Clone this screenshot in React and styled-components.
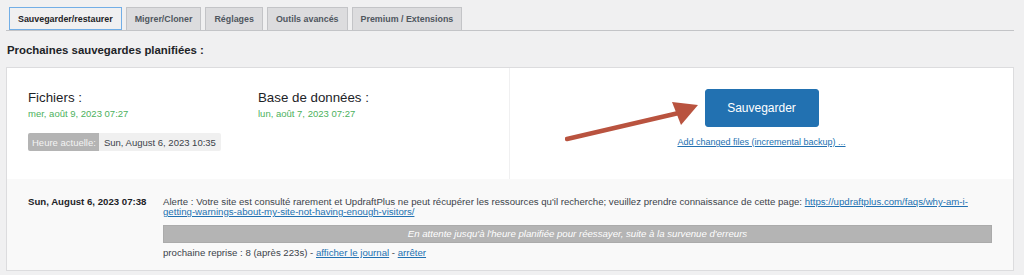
import React from "react";
import styled, { createGlobalStyle } from "styled-components";

const Global = createGlobalStyle`
  html, body { margin: 0; padding: 0; background: #f0f0f1; }
  body { font-family: "Liberation Sans", Arial, sans-serif; color: #1d2327; }
`;

const Page = styled.div`
  padding: 7px 10px 0 6px;
  width: 1024px;
  box-sizing: border-box;
`;

const TabBar = styled.div`
  display: flex;
  gap: 4px;
  padding-left: 3px;
  border-bottom: 1px solid #c3c4c7;
  height: 23px;
`;

const Tab = styled.div`
  height: 23px;
  box-sizing: border-box;
  padding: 0 8px;
  display: flex;
  align-items: center;
  font-size: 8.9px;
  font-weight: bold;
  color: ${(p) => (p.$active ? "#1d2327" : "#50575e")};
  background: ${(p) => (p.$active ? "#f0f0f1" : "#dcdcde")};
  border: 1px solid ${(p) => (p.$active ? "#72aee6" : "#c3c4c7")};
  border-bottom: ${(p) => (p.$active ? "1px solid #72aee6" : "none")};
`;

const Heading = styled.h2`
  margin: 0;
  padding: 11px 0 0 1px;
  font-size: 11.4px;
  font-weight: bold;
  line-height: 16px;
  color: #1d2327;
`;

const Panel = styled.div`
  margin-top: 9px;
  border: 1px solid #dcdcde;
  background: #f9f9f9;
`;

const TopRow = styled.div`
  display: grid;
  grid-template-columns: 1fr 1fr;
  background: #fff;
  height: 111px;
`;

const LeftCol = styled.div`
  padding: 22px 0 0 21px;
  border-right: 1px solid #f0f0f1;
`;

const Schedules = styled.div`
  display: flex;
`;

const Schedule = styled.div`
  width: 230px;
`;

const SchedTitle = styled.div`
  font-size: 13.3px;
  line-height: 16px;
  color: #1d2327;
`;

const SchedDate = styled.div`
  font-size: 9.5px;
  line-height: 12px;
  margin-top: 2px;
  color: #4cb15c;
`;

const TimeBadge = styled.div`
  display: inline-flex;
  margin-top: 13px;
  height: 18px;
  font-size: 9.5px;
  border-radius: 2px;
  overflow: hidden;
`;

const BadgeLabel = styled.span`
  background: #b4b4b4;
  color: #f3f3f3;
  padding: 0 3px 0 4px;
  display: flex;
  align-items: center;
`;

const BadgeValue = styled.span`
  background: #f0f0f0;
  color: #3c434a;
  padding: 0 5px 0 5px;
  display: flex;
  align-items: center;
`;

const RightCol = styled.div`
  position: relative;
  display: flex;
  flex-direction: column;
  align-items: center;
  padding-top: 21px;
`;

const BackupButton = styled.button`
  width: 114px;
  height: 38px;
  background: #2271b1;
  border: 1px solid #2271b1;
  border-radius: 3px;
  color: #fff;
  font-family: "Liberation Sans", Arial, sans-serif;
  font-size: 12px;
  cursor: pointer;
`;

const SmallLink = styled.a`
  margin-top: 10px;
  font-size: 9px;
  color: #2271b1;
  text-decoration: underline;
`;

const Arrow = styled.svg`
  position: absolute;
  left: 55px;
  top: 30px;
`;

const BottomRow = styled.div`
  display: flex;
  padding: 18px 21px 12px 21px;
  font-size: 9.65px;
  line-height: 10px;
  color: #3c434a;
`;

const JobDate = styled.div`
  width: 135px;
  flex: none;
  font-weight: bold;
  color: #1d2327;
`;

const JobBody = styled.div`
  flex: 1;
`;

const Link = styled.a`
  color: #2271b1;
  text-decoration: underline;
`;

const StatusBar = styled.div`
  margin-top: 8px;
  height: 18px;
  background: #b4b4b4;
  border: 1px solid #ababab;
  box-sizing: border-box;
  display: flex;
  align-items: center;
  justify-content: center;
  color: #fff;
  font-style: italic;
`;

const Retry = styled.div`
  margin-top: 5px;
`;

export default function App() {
  return (
    <>
      <Global />
      <Page>
        <TabBar>
          <Tab $active>Sauvegarder/restaurer</Tab>
          <Tab>Migrer/Cloner</Tab>
          <Tab>Réglages</Tab>
          <Tab>Outils avancés</Tab>
          <Tab>Premium / Extensions</Tab>
        </TabBar>
        <Heading>Prochaines sauvegardes planifiées :</Heading>
        <Panel>
          <TopRow>
            <LeftCol>
              <Schedules>
                <Schedule>
                  <SchedTitle>Fichiers :</SchedTitle>
                  <SchedDate>mer, août 9, 2023 07:27</SchedDate>
                </Schedule>
                <Schedule>
                  <SchedTitle>Base de données :</SchedTitle>
                  <SchedDate>lun, août 7, 2023 07:27</SchedDate>
                </Schedule>
              </Schedules>
              <TimeBadge>
                <BadgeLabel>Heure actuelle:</BadgeLabel>
                <BadgeValue>Sun, August 6, 2023 10:35</BadgeValue>
              </TimeBadge>
            </LeftCol>
            <RightCol>
              <Arrow width="140" height="50" viewBox="0 0 140 50">
                <line x1="2" y1="41" x2="118" y2="14" stroke="#b9533f" strokeWidth="4.5" strokeLinecap="round" />
                <polygon points="133,7 107,4 116,27" fill="#b9533f" />
              </Arrow>
              <BackupButton>Sauvegarder</BackupButton>
              <SmallLink href="#">Add changed files (incremental backup) ...</SmallLink>
            </RightCol>
          </TopRow>
          <BottomRow>
            <JobDate>Sun, August 6, 2023 07:38</JobDate>
            <JobBody>
              <div>
                Alerte : Votre site est consulté rarement et UpdraftPlus ne peut récupérer les ressources qu'il recherche; veuillez prendre connaissance de cette page:{" "}
                <Link href="#">https://updraftplus.com/faqs/why-am-i-getting-warnings-about-my-site-not-having-enough-visitors/</Link>
              </div>
              <StatusBar>En attente jusqu'à l'heure planifiée pour réessayer, suite à la survenue d'erreurs</StatusBar>
              <Retry>
                prochaine reprise : 8 (après 223s) - <Link href="#">afficher le journal</Link> - <Link href="#">arrêter</Link>
              </Retry>
            </JobBody>
          </BottomRow>
        </Panel>
      </Page>
    </>
  );
}
